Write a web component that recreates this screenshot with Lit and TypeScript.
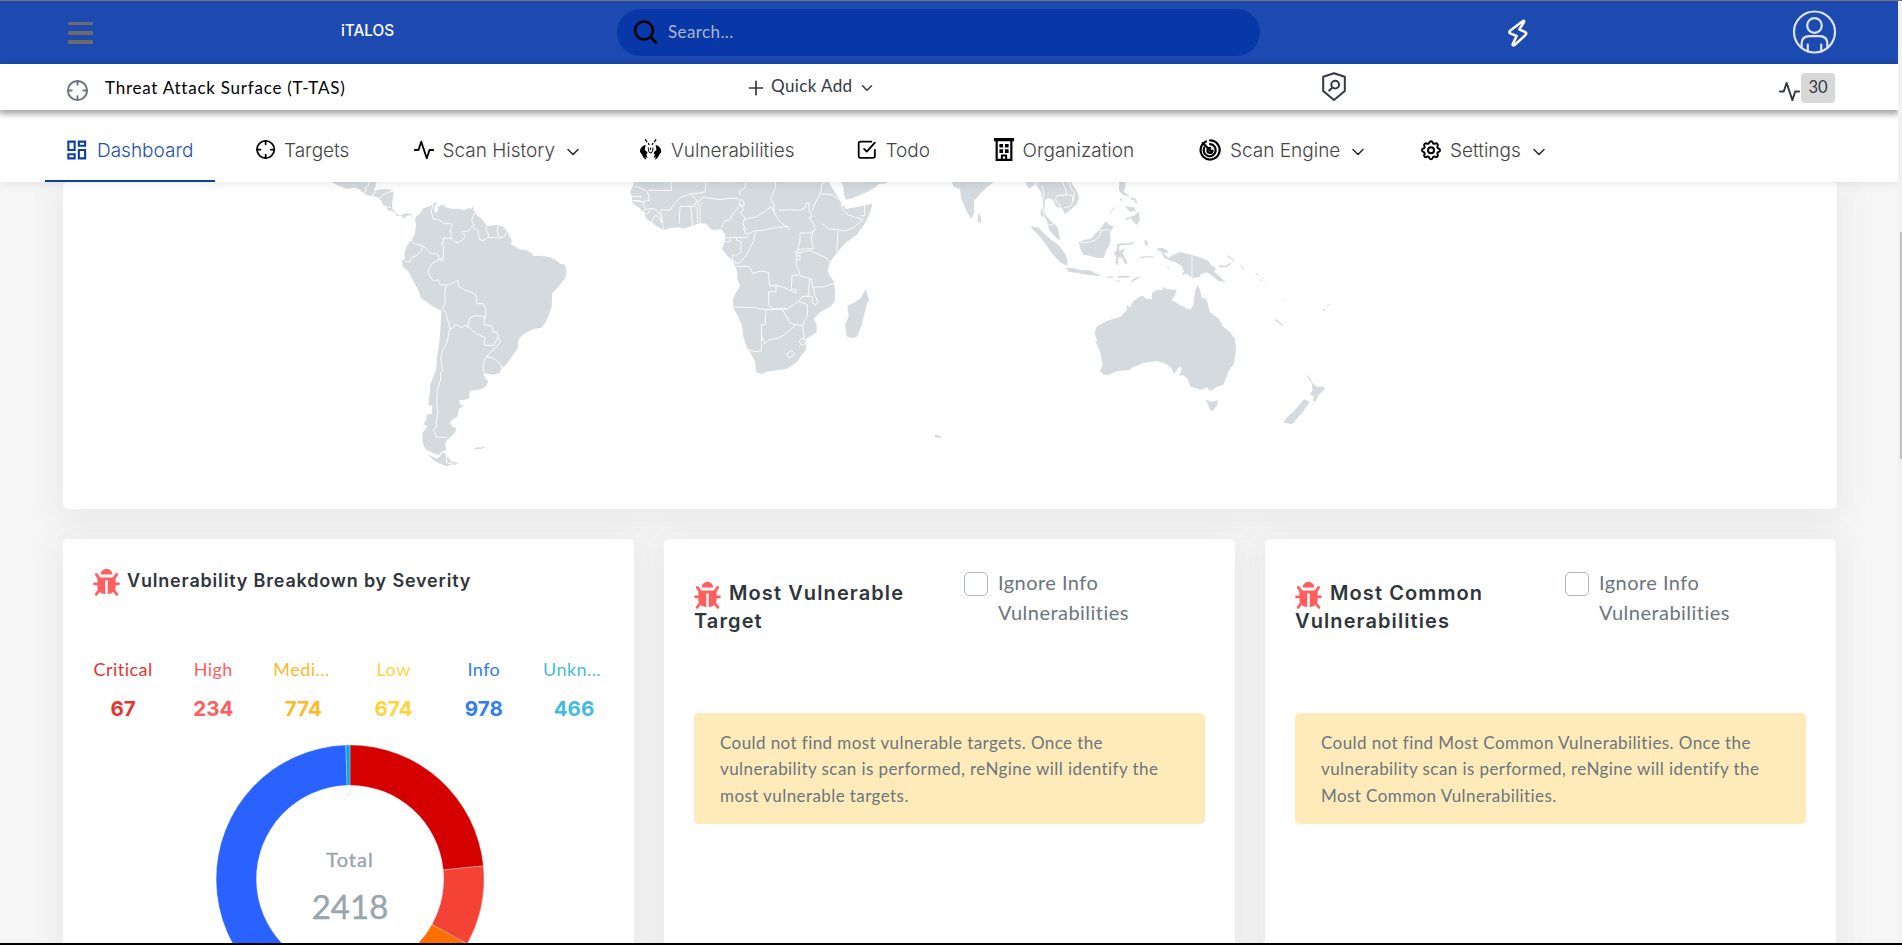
import { LitElement, html, svg, css } from "lit";
import { customElement } from "lit/decorators.js";

const chevron = svg`<polyline points="6 9 12 15 18 9"/>`;
const crosshair = svg`<circle cx="12" cy="12" r="10"/><path d="M22 12h-4M6 12H2M12 6V2M12 22v-4"/>`;
const activity = svg`<polyline points="22 12 18 12 15 21 9 3 6 12 2 12"/>`;

const dashboard = svg`<path fill="currentColor" stroke="none" d="M19 5v2h-4V5h4M9 5v6H5V5h4m10 8v6h-4v-6h4M9 17v2H5v-2h4M21 3h-8v6h8V3zM11 3H3v10h8V3zm10 8h-8v10h8V11zm-10 4H3v6h8v-6z"/>`;
const bugHands = svg`<g fill="currentColor" stroke="none">
  <path d="M6.600 6.800C3 8 .4 11 .4 13.800C.4 15.400 1.800 16 2.600 17.600C3.400 19.400 4.400 21.800 7.400 23.200L6.200 19.800 8.800 21.600 7.400 17.600C8.200 17 8.600 16 8.400 14.800L5.600 12.400Z"/>
  <path d="M17.400 6.800C21 8 23.600 11 23.600 13.800C23.600 15.400 22.200 16 21.400 17.600C20.600 19.400 19.600 21.800 16.600 23.200L17.800 19.800 15.200 21.600 16.600 17.600C15.800 17 15.400 16 15.600 14.800L18.400 12.400Z"/></g>
  <path stroke-width="1.500" d="M6.400 1.400l1.400 2M9.600 5.400l.6 1M17.600 1.400l-1.400 2M14.400 5.400l-.6 1"/>
  <path stroke-width="1.100" d="M9.400 10c.2 3.800 1 5.400 2.600 5.800 1.600-.4 2.400-2 2.600-5.800M12 10.200v1.800"/>`;
const todo = svg`<polyline points="9 11 12 14 21 4"/><path d="M21 12v7a2 2 0 0 1-2 2H5a2 2 0 0 1-2-2V5a2 2 0 0 1 2-2h12"/>`;
const building = svg`<path fill="currentColor" stroke="none" fill-rule="evenodd" d="M1 0h22v3.400h-1.800V25H2.800V3.400H1zM5.200 3.400V22.600H8.600V18h6.800v4.600h3.400V3.400zM7 6.400h4v4H7zM13 6.400h4v4h-4zM7 12.200h4v4H7zM13 12.200h4v4h-4zM10.800 20.200v2.400h2.400v-2.400z"/>`;
const radar = svg`<path fill="none" stroke-width="2.400" d="M7.600 2.600A10.400 10.400 0 1 0 12 1.600M5.600 9.400A6.600 6.600 0 1 0 12 5.600M12 9.600A2.800 2.800 0 1 0 14.700 12.600M4 4.400L12.400 12.600"/>`;
const gear = svg`<circle cx="12" cy="12" r="3"/><path d="M10.325 4.317c.426-1.756 2.924-1.756 3.350 0a1.724 1.724 0 0 0 2.573 1.066c1.543-.94 3.310.826 2.370 2.370a1.724 1.724 0 0 0 1.065 2.572c1.756.426 1.756 2.924 0 3.350a1.724 1.724 0 0 0-1.066 2.573c.94 1.543-.826 3.310-2.370 2.370a1.724 1.724 0 0 0-2.572 1.065c-.426 1.756-2.924 1.756-3.350 0a1.724 1.724 0 0 0-2.573-1.066c-1.543.94-3.310-.826-2.370-2.370a1.724 1.724 0 0 0-1.065-2.572c-1.756-.426-1.756-2.924 0-3.350a1.724 1.724 0 0 0 1.066-2.573c-.94-1.543.826-3.310 2.370-2.370 1 .608 2.296.07 2.572-1.065z"/>`;

const bug = html`<svg class="bug" viewBox="0 0 27 28"><path fill="currentColor" d="M7.600 6.600a5.900 5.900 0 0 1 11.800 0z"/><path fill="currentColor" d="M5.400 9.400h16.200c.8 0 1 .5 1 1.300v8.600c0 3.700-3.200 6.400-7.900 6.900V12.200h-2.400v14c-4.700-.5-7.900-3.200-7.900-6.900v-8.600c0-.8.2-1.300 1-1.300z"/><path fill="none" stroke="currentColor" stroke-width="2.800" stroke-linecap="round" d="M3.300 6.400l3 4.200M23.700 6.400l-3 4.200M1.500 15.800h4M25.500 15.800h-4M3.100 26.300l4-5.200M23.900 26.300l-4-5.200"/></svg>`;

const nav = [
  { label: "Dashboard", icon: dashboard, box: "2.700 1.500 21 21", menu: false },
  { label: "Targets", icon: crosshair, box: "-1.500 -.2 25.500 25.500", menu: false },
  { label: "Scan History", icon: activity, box: "0 0 24 24", menu: true },
  { label: "Vulnerabilities", icon: bugHands, box: "1.500 .5 24 24", menu: false },
  { label: "Todo", icon: todo, box: "0 0 24.500 24.500", menu: false },
  { label: "Organization", icon: building, box: "0 1 24 24", menu: false },
  { label: "Scan Engine", icon: radar, box: "1 0 24 24", menu: true },
  { label: "Settings", icon: gear, box: "1 .8 22 22", menu: true },
];

const severities = [
  { name: "Critical", count: 67, tone: "critical" },
  { name: "High", count: 234, tone: "high" },
  { name: "Medi...", count: 774, tone: "medium" },
  { name: "Low", count: 674, tone: "low" },
  { name: "Info", count: 978, tone: "info" },
  { name: "Unkn...", count: 466, tone: "unknown" },
];

const slices = [
  { from: 0, to: 84.4, fill: "#d50000" },
  { from: 84.4, to: 119, fill: "#f44336" },
  { from: 119, to: 180, fill: "#ff6f00" },
  { from: 180, to: 358.2, fill: "#2962ff" },
  { from: 358.2, to: 360, fill: "#03a9f4" },
];

function ring(from: number, to: number): string {
  const R = 134, r = 93.7, rad = Math.PI / 180;
  const at = (q: number, a: number) => `${(134 + q * Math.sin(a * rad)).toFixed(2)} ${(134 - q * Math.cos(a * rad)).toFixed(2)}`;
  const big = to - from > 180 ? 1 : 0;
  return `M${at(R, from)}A${R} ${R} 0 ${big} 1 ${at(R, to)}L${at(r, to)}A${r} ${r} 0 ${big} 0 ${at(r, from)}Z`;
}

/* Land outlines and inner borders, one group per region, at three units per pixel. */
const americas = {
  land: "M88 18L110 30 142 42 165 38 180 45 190 55 205 62 218 62 235 70 245 78 248 90 260 97 262 105 285 112 288 122 305 124 312 131 318 124 330 120 345 131 350 122 358 118 370 100 390 94 400 85 412 80 404 95 402 108 410 115 414 105 412 95 420 92 428 88 440 98 460 102 480 102 492 106 505 99 518 103 525 110 532 122 545 132 555 145 560 152 590 150 610 155 622 170 628 185 636 195 632 208 652 218 655 222 680 226 697 235 700 243 720 242 750 246 775 260 780 267 793 268 800 290 795 310 775 335 757 355 755 395 747 420 735 445 724 458 700 462 670 478 655 495 653 520 635 545 618 570 608 576 598 595 580 599 552 594 550 600 565 620 558 634 545 642 510 648 506 672 488 675 478 675 480 688 492 694 477 700 472 725 455 735 450 745 458 756 468 758 466 770 448 790 437 800 435 812 440 825 425 830 415 840 400 835 375 822 368 800 367 775 383 752 370 748 378 735 382 718 395 718 397 692 385 690 392 625 408 585 412 540 418 500 422 450 424 408 400 395 362 368 358 352 340 318 325 288 308 275 306 258 315 250 313 235 322 210 335 195 345 175 348 150 345 134 340 126 332 116 318 114 300 122 290 116 278 102 276 90 281 52 270 43 240 43 222 48 225 38 230 18ZM382 838L412 852 425 838 432 832 440 842 455 860 475 864 468 869 455 868 440 874 420 866 400 855ZM522 822l10-7 8 3 12-4 3 4-13 4-10-1-6 3ZM514 98l6-2 1 6-5 2Z",
  lines: "M205 18v16l-10 4 4 8-10 8M218 62l8-14M225 66l16 4 8-10 14-8 18-4M245 90l20 6 8 2M345 118v14M400 85l-6 25 5 22 20 4 14 10 20 0 4 10-6 10 4 24h-26l2 12-6 2 6 10-2 45M335 195l6 10 28 8 10 8 14 16 16-2 8 8-2 8 12 8M369 213l-4 14-18 16-12 4-8 16-16-8M429 248l-20 10-14 8-12 24 10 20 8 8 14-4 6 16 16-2M457 192l12 12 18-8 10-14-12-10 2-2 18-2 8-10 8-4-6-20 6-12 4-10M520 160l14 6 4 28 14 2 12-8 20 0 14 2 16-6 6-14M564 152l-8 10 8 14 2 12M594 152l-2 18 6 18M438 330l14-2 22-12 2 18 20 12 20 6 12 8 2 26h20l8 18-2 20-4 6M438 330l-4 24 2 30-10 20M428 402l10 10 4 20 8 28 8 0 6-10 12 2 8 6 10-6 12 4M504 452l6-24 16-6 28 2 0 26 22 4 4 18 12 0 2 16-14 24-28-2 4-22-28-12-28-24M592 488l8 8-2 10-38 38-8 14-2 34M560 544l24 8 20 18v10M450 460l-4 18-6 26-14 24-4 24 6 34-6 8 0 20-10 30-2 36 4 32-6 32 2 12-10 8 6 14 2 8 34 2M440 838v26l18 2",
};
const africa = {
  land: "M102 18L98 35 90 50 95 62 96 78 100 88 118 98 132 115 138 130 165 150 190 165 215 158 240 157 250 161 275 152 300 145 320 146 330 160 342 166 362 162 376 178 375 198 366 222 380 240 398 258 405 272 412 292 411 310 420 332 408 352 398 375 400 400 415 425 426 452 430 485 440 515 455 540 466 562 468 590 484 598 500 590 535 585 560 582 590 562 605 540 617 525 620 505 618 492 650 472 650 450 641 432 660 412 690 395 704 380 705 350 702 320 688 300 684 285 690 262 715 228 735 205 770 180 798 140 812 108 817 86 790 92 740 102 728 90 715 68 700 45 684 18ZM797 342L808 378 802 382 795 410 785 450 772 484 758 490 740 484 735 450 746 425 742 392 765 382 782 370ZM722 18L730 35 732 60 738 75 760 68 800 52 828 35 836 28 860 25 862 18Z",
  lines: "M90 65h36M92 77h30l10 8M104 34q28 6 40 20l4 22-20 4-26-2M146 46h68V18M128 80l8 24 20-4 14 4 12 18 4 22-12-20-10-2-8 16 0 12M134 104l-4 10 10 4 14-14M182 104l4 30 4 30M184 104l28 2 6-14 22-24 32-12 20 22-12 16-40 0-2 52M272 56h14l30-6 2-32M272 94l6 60M284 92l8 8v44M296 94l-4-8 16-20 24 4 28 4 28-4 24 0 8 10-6 20-16 18-10 18-12 0-12 22M420 60l-2-10 18-12V18M420 72l12 8 0 14-12-6 10 16-10 8 16 18-8 14 10 24M300 144V92l8-10M430 134l36-8 24-14 24-18 10 22 16 24 30 24M526 18l0 20-14 34 10 18 2 26M430 158l6 20 30-10 24-2 24-6 50-6M536 106l34-2 28 2 18-8 2-14 8 0 2 24 8 16-8 4 12 18 6 18-10 10-36 0M636 108l6-16 22-44 0-20 20-10M664 56l34 4 20 14 18 18-14-4 6 14 16 18 34 10 10 4-24 22-28 12-26-4-24-2-20-16M782 122h12V92M714 168l-4 60M640 164l-6 28 6 28-48 4M600 174l0 24-10 36 40-8 50 24 14 16M376 188h66l4-8M376 200h16v-10M410 188l0 8 14 4-2 32-10 8-16 0 2 18 10 0M466 172l-6 28-18 36-22 28h-16M410 274h38l10 22 22-8 26 4 2 40 20-2 0 20-22 0v40l14 12 40 0M400 396l68 2 14 4 38 2M586 228l4 16-2 22 12 32-24 4-2 40 14 2-0 10-40-18-24-4M588 242h12M586 254h14l0-22M598 302l36 10 4 24 32 0 34-12M628 312l-2 50-20 4-10 14M640 336l4 24 10 20-8 12-10-12 2-16-18 0M596 380l26 8 0 34-14 30-36-6-26-44-48 2-2 44-12 2v78l-16 2-26-6M484 480l10 26 14-12 24-4 20-10 34-28M544 402l18 0 32-22M608 452l4 36 6 18-14 4-6-10 6-10 10 2M562 534l12-8 10 10-12 12-10-4z",
};
const asia = {
  land: "M136 18L142 35 150 40 165 28 175 40 184 60 190 85 182 112 182 120 190 125 200 140 208 165 222 182 240 197 240 190 232 155 222 148 205 130 192 112 195 75 205 68 220 75 228 95 245 98 255 118 270 105 290 88 297 70 292 50 278 30 272 18ZM150 153L175 158 195 178 215 195 238 212 258 240 262 252 262 272 240 262 215 235 195 205 180 185 160 165ZM258 278L275 278 300 285 330 286 338 292 362 300 358 303 325 300 290 294 265 290ZM296 200L310 196 335 190 348 175 362 160 378 138 388 150 402 155 390 170 392 195 388 210 378 228 372 248 355 250 330 242 310 240 300 220ZM412 206L425 205 450 204 466 198 455 208 435 210 418 212 418 228 436 220 428 235 442 262 438 270 425 248 416 245 414 270 407 268 408 245 402 235 410 225ZM380 306l18-3 4 4-18 3ZM410 304l30-2 10 2-4 4-32 0ZM408 314l12 4-2 3-10-4ZM452 320l10-10 24-7-12 8-20 10ZM478 246l24-3 22 2-4 3-20-1-20 3ZM494 194l8 4 2 12-6 4-4-8ZM418 18L416 45 428 60 440 62 450 70 445 60 430 50 436 38 437 18ZM452 68l16 2 4 16-8-4-2-8-10 0ZM434 92l14 4 14 0 6 14-8-2-10 2-8-8ZM420 70l8 4-2 6-6-6ZM436 130L450 126 465 120 476 110 480 135 470 150 460 140 452 130 438 136ZM388 114l18-18 1 2-18 18ZM528 222L545 218 562 225 564 235 552 232 556 240 565 248 578 240 600 230 615 235 640 241 668 250 685 258 695 272 708 280 702 290 720 305 738 322 715 318 700 305 680 292 662 298 658 306 640 310 630 305 622 296 603 300 612 290 605 272 585 262 568 256 552 248 545 232ZM562 274l6 2-2 6-4-4ZM716 270l20 2 14-8 4 2-12 10-22 2ZM742 240l20 14 2 6-3 0-4-6-16-10ZM782 270l12 12-3 2-10-12ZM826 294l12 6-2 2-10-5ZM838 312l10 6-2 1-9-4ZM845 303l7 8-2 1ZM856 322l4 4-3 0ZM910 372l5 6-2 2-3-6ZM884 430l14 10 14 12-4 1-14-10-10-10ZM1026 404l10-2 0 4-8 2ZM1038 392l14-5 0 2-12 5ZM545 335L560 342 590 345 585 358 575 375 600 390 630 404 640 390 645 350 652 330 660 345 665 368 680 372 690 412 715 430 730 455 750 470 765 492 768 525 762 565 745 590 730 630 710 636 692 648 680 637 665 645 632 635 622 610 608 600 598 602 606 578 598 575 582 598 575 580 560 568 530 558 490 564 455 578 450 585 412 588 385 600 370 598 360 588 368 570 360 530 345 495 352 500 344 475 350 455 380 438 422 425 440 405 442 390 450 398 458 380 478 365 488 362 500 373 516 372 516 355 530 345 550 345ZM678 674L695 680 713 675 712 690 698 708 690 705ZM976 598L990 608 998 625 1010 635 1034 635 1032 645 1018 658 1005 680 998 678 1002 665 990 658 998 645 994 622ZM972 673L990 680 975 700 970 710 955 725 940 745 932 748 910 742 920 728 945 705ZM0 18L18 18 8 35 0 36ZM0 128l3 3 0 10-3 4Z",
  lines: "M164 18l10 22 12 18M186 30l6 30-6 20 4 36 14 34 14-2M246 18l10 24 4 18-28 2-6 12 16 22M260 58l18 4 0 18-8 14-16 4M264 18l6 10 4 14 10 12-4 24M300 202l26 0 22-8 8-8 10-20 22-2M352 160l12 8M636 241v68",
};

@customElement("app-root")
export class AppRoot extends LitElement {
  static styles = css`
    :host { display: block; height: 945px; overflow: hidden; color: #6c757d; font-family: Lato, "Open Sans", sans-serif; }
    * { box-sizing: border-box; }
    svg { display: block; overflow: visible; }
    .screen { display: grid; grid-template-columns: 1898px 4px; grid-template-rows: 1px 942px 2px; height: 945px; }
    .edge { grid-column: 1 / -1; background: #757575; }
    .edge.bottom { background: #000; }
    .page { display: flex; flex-direction: column; background: #f6f6f6; overflow: hidden; }
    .scroll { background: #f1f1f1; padding: 231px 0 0 2px; }
    .thumb { height: 227px; background: #c1c1c1; }
    .line { fill: none; stroke: currentColor; stroke-width: 2; stroke-linecap: round; stroke-linejoin: round; }
    .head { position: relative; z-index: 2; flex: none; }

    .topbar { display: flex; height: 63px; background: #1c4ab0; }
    .burger { display: grid; gap: 5.600px; width: 25px; margin: 20.500px 0 0 68px; align-content: start; }
    .burger i { height: 3.800px; border-radius: 1px; background: #6d6b67; }
    .brand { width: 60px; margin: 20px 0 0 248px; font: 450 15.300px/20px Inter, sans-serif; color: #fff; }
    .search { display: flex; width: 643px; height: 47px; margin: 8px 0 0 216px; border-radius: 24px; background: #0838a8; color: #abb6c6; }
    .search svg { width: 25px; height: 25px; margin: 10px 0 0 16px; color: #000; }
    .search span { margin: 12px 0 0 10px; font-size: 17px; line-height: 22px; letter-spacing: .4px; }
    .bolt { width: 25px; height: 29px; margin: 17px 0 0 244.500px; color: #fff; }
    .user { width: 43px; height: 44px; margin: 9px 0 0 263.500px; color: #dde5f6; }

    .subbar { position: relative; z-index: 1; display: flex; height: 46px; background: #fff; color: #323a46; box-shadow: 0 3px 6px 1px rgba(0, 0, 0, .36); }
    .target { width: 23px; height: 23px; margin: 14.500px 0 0 66px; color: #6c757d; }
    .surface { width: 250px; margin: 13px 0 0 16px; font-size: 17px; line-height: 22px; letter-spacing: .76px; color: #000; }
    .plus { width: 20px; height: 20px; margin: 14px 0 0 391px; }
    .quick { width: 84px; margin: 11px 0 0 5px; font-size: 17px; line-height: 22px; letter-spacing: .4px; }
    .quick-chev { width: 18px; height: 18px; margin: 15px 0 0 3px; }
    .shield { width: 24px; height: 29px; margin: 8px 0 0 446px; }
    .pulse { width: 23px; height: 23px; margin: 16px 0 0 432px; }
    .badge { width: 34px; height: 30px; margin-top: 9px; border-radius: 4px; background: #d8d8d8; font: 16.500px/29px Lato, sans-serif; text-align: center; }

    .nav { display: grid; grid-template-columns: 187px 158.500px 228.500px 214.500px 137px 207.500px 220px 180px; padding-left: 45px; height: 72px; background: #fff; color: #000; box-shadow: 0 3px 8px rgba(0, 0, 0, .07); }
    .item { display: flex; align-items: center; padding: 9px 0 0 22px; font: 300 19px/24px Inter, sans-serif; color: #444; border-bottom: 2px solid transparent; }
    .item:first-child { margin-right: 17px; color: #2450b0; border-color: #0d3ea8; }
    .item .ico { flex: none; width: 22px; height: 22px; margin-top: 1px; color: #000; }
    .item:first-child .ico { color: #0d3ea8; }
    .item .lbl { margin: 3px 0 0 8px; white-space: nowrap; }
    .item .chev { flex: none; width: 20px; height: 20px; margin: 5px 0 0 8px; stroke-width: 1.700; color: #222; }

    .body { display: flex; flex-direction: column; gap: 30px; padding: 0 61px 0 63px; }
    .card { border-radius: 5px; background: #fff; box-shadow: 0 6px 30px 6px rgba(86, 86, 105, .08); }
    .map { height: 327px; overflow: visible; }
    .map svg { width: 1773px; height: 327px; overflow: hidden; }
    .land { fill: #d5dade; }
    .frontier { fill: none; stroke: #fff; stroke-width: 2.600; stroke-linejoin: round; }
    .row { display: grid; grid-template-columns: repeat(3, 571px); gap: 30px; height: 480px; }
    .row .card { padding: 30px; }
    .bug { width: 27px; height: 28px; color: #ff5f5f; }
    h2, h3, p { margin: 0; }
    h2 { display: flex; font: 600 18px/24px Inter, sans-serif; letter-spacing: .82px; color: #2f353b; }
    h2 .bug { margin-top: -1px; }
    h2 span { margin: 0 0 0 7px; }
    .counts { display: grid; grid-template-columns: repeat(6, 90.200px); width: 541px; margin: 61px 0 0 -15px; text-align: center; }
    .counts .name { font-size: 18px; line-height: 24px; letter-spacing: .45px; }
    .counts .num { margin-top: 15px; font: 700 20.500px/26px Inter, sans-serif; letter-spacing: .1px; }
    .counts .cut { position: relative; left: -2px; }
    .critical { color: #e53431; } .high { color: #ff5c5f; } .medium { color: #fdb92a; }
    .low { color: #ffd43b; } .info { color: #2f7bf9; } .unknown { color: #45bbe0; }
    .donut { display: grid; width: 268px; height: 268px; margin: 23px 0 0 123px; }
    .donut > * { grid-area: 1 / 1; }
    .sum { text-align: center; color: #99a6ae; }
    .sum .cap { margin-top: 102px; font-size: 20px; line-height: 24px; letter-spacing: 1px; -webkit-text-stroke: .4px currentColor; }
    .sum .val { margin-top: 15px; font-size: 33px; line-height: 40px; -webkit-text-stroke: .4px currentColor; }

    .top { display: flex; height: 144px; }
    h3 { width: 270px; padding-top: 12px; font: 600 20px/28px Inter, sans-serif; letter-spacing: 1.100px; color: #2f353b; }
    h3 .first { display: flex; }
    h3 .first span { margin: -2px 0 0 8px; }
    h3 .second { display: block; margin-top: -2px; }
    .check { width: 24px; height: 24px; margin: 2.500px 10px 0 0; border: 1px solid #adb5bd; border-radius: 5px; background: #fff; }
    .opt { margin-top: -2px; font-size: 20px; line-height: 30px; letter-spacing: .46px; }
    .note { height: 111px; padding: 16.500px 26px 0; border-radius: 5px; background: #feebb9; font-size: 17px; line-height: 26.600px; letter-spacing: .42px; white-space: nowrap; }
  `;

  region(r: { land: string; lines: string }, place: string) {
    return svg`<g transform=${place}><path class="land" d=${r.land}/><path class="frontier" d=${r.lines}/></g>`;
  }

  rankCard(first: string, second: string, lines: string[]) {
    return html`<section class="card">
      <div class="top">
        <h3><span class="first">${bug}<span>${first}</span></span><span class="second">${second}</span></h3>
        <i class="check"></i>
        <div class="opt">Ignore Info<br />Vulnerabilities</div>
      </div>
      <p class="note">${lines.map((l) => html`${l}<br />`)}</p>
    </section>`;
  }

  render() {
    return html`<div class="screen">
      <div class="edge"></div>
      <div class="page">
        <header class="head">
          <div class="topbar">
            <div class="burger"><i></i><i></i><i></i></div>
            <div class="brand">iTALOS</div>
            <div class="search">
              <svg class="line" viewBox="0 0 25 25"><circle cx="11" cy="11.500" r="9" stroke-width="2.600"/><path stroke-width="2.800" d="M17.500 18l5.500 5.500"/></svg>
              <span>Search...</span>
            </div>
            <svg class="bolt line" viewBox="0 0 25 29"><path stroke-width="2.500" d="M17.600 3.200L5 12.800Q3.600 14.200 5.200 15.400L11.600 18 7.600 26.400Q7.600 28 9.600 27L20.600 16.800Q21.800 15.400 20.400 14.200L14.200 11.400 19 4.400Q19.600 1.800 17.600 3.200Z"/></svg>
            <svg class="user line" viewBox="0 0 43 44"><g stroke-width="2.200"><circle cx="21.500" cy="22" r="20.500"/><circle cx="21.500" cy="15.500" r="7.300"/><path d="M8.600 37.800V34q0-7.800 7.800-7.800h10.200q7.800 0 7.800 7.800v3.800M14.800 34.500v7M28.200 34.500v7"/></g></svg>
          </div>
          <div class="subbar">
            <svg class="target line" viewBox="0 0 24 24">${crosshair}</svg>
            <div class="surface">Threat Attack Surface (T-TAS)</div>
            <svg class="plus line" viewBox="0 0 24 24"><path d="M12 4v16M4 12h16"/></svg>
            <div class="quick">Quick Add</div>
            <svg class="quick-chev line" viewBox="0 0 24 24">${chevron}</svg>
            <svg class="shield line" viewBox="0 0 24 29"><path d="M12 1.200L22.800 4.800V19L12 28 1.200 19V4.800Z"/><circle cx="13.200" cy="12.600" r="3.900"/><path d="M10.400 15.600L7.200 18.600"/></svg>
            <svg class="pulse line" viewBox="0 0 24 24">${activity}</svg>
            <div class="badge">30</div>
          </div>
          <nav class="nav">
            ${nav.map((n) => html`<div class="item">
              <svg class="ico line" viewBox=${n.box}>${n.icon}</svg>
              <span class="lbl">${n.label}</span>
              ${n.menu ? html`<svg class="chev line" viewBox="0 0 24 24">${chevron}</svg>` : ""}
            </div>`)}
          </nav>
        </header>
        <main class="body">
          <section class="card map">
            <svg viewBox="63 182 1773 327">
              ${this.region(americas, "translate(300 175) scale(.33333)")}
              ${this.region(africa, "translate(600 175) scale(.33333)")}
              ${this.region(asia, "translate(980 175) scale(.33333)")}
              <path class="land" d="M951 180L954 187 960 189 961 198 967 212 971 219 974 213 974 201 980 194 987 187 997 180ZM978 213l3 4 0 4-3 2ZM935 434.500l4 1 3 1-4 1.500-3-1Z"/>
            </svg>
          </section>
          <div class="row">
            <section class="card">
              <h2>${bug}<span>Vulnerability Breakdown by Severity</span></h2>
              <div class="counts">
                ${severities.map((s) => html`<div class=${s.tone}>
                  <div class="name ${s.name.endsWith("...") ? "cut" : ""}">${s.name}</div>
                  <div class="num">${s.count}</div>
                </div>`)}
              </div>
              <div class="donut">
                <svg viewBox="0 0 268 268">${slices.map((s) => svg`<path d=${ring(s.from, s.to)} fill=${s.fill} stroke="#fff" stroke-opacity=".35" stroke-width=".8"/>`)}</svg>
                <div class="sum"><div class="cap">Total</div><div class="val">2418</div></div>
              </div>
            </section>
            ${this.rankCard("Most Vulnerable", "Target", [
              "Could not find most vulnerable targets. Once the",
              "vulnerability scan is performed, reNgine will identify the",
              "most vulnerable targets.",
            ])}
            ${this.rankCard("Most Common", "Vulnerabilities", [
              "Could not find Most Common Vulnerabilities. Once the",
              "vulnerability scan is performed, reNgine will identify the",
              "Most Common Vulnerabilities.",
            ])}
          </div>
        </main>
      </div>
      <div class="scroll"><div class="thumb"></div></div>
      <div class="edge bottom"></div>
    </div>`;
  }
}
